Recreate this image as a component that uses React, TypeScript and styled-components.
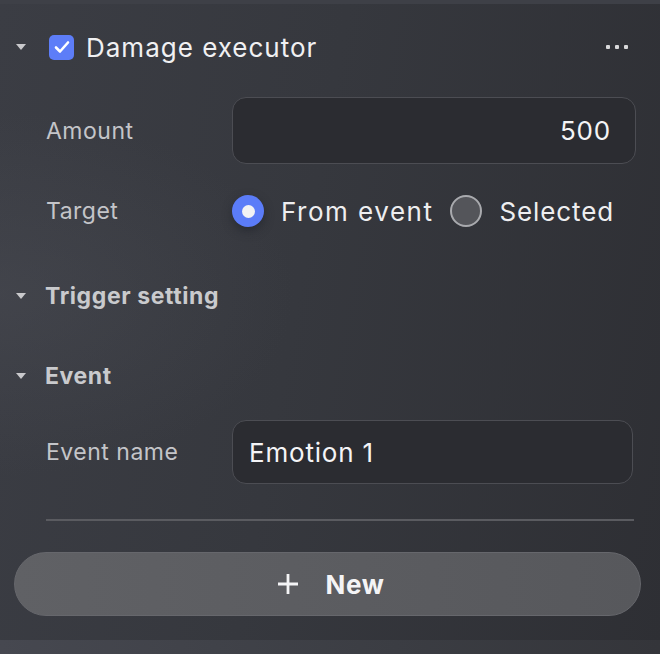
import React from "react";
import styled, { createGlobalStyle } from "styled-components";

const Global = createGlobalStyle`
  html, body { margin: 0; padding: 0; }
  body {
    width: 660px; height: 654px; overflow: hidden;
    font-family: Inter, "Noto Sans", sans-serif;
    background: #34363c;
  }
`;

const Panel = styled.div`
  position: relative;
  width: 660px;
  height: 654px;
  box-sizing: border-box;
  padding: 0 19px 0 14px;
  background:
    radial-gradient(ellipse 420px 260px at 0% 45%, rgba(80,82,90,0.35), transparent 70%),
    linear-gradient(100deg, #3b3d44 0%, #36383e 45%, #2e2f34 100%);
  display: flex;
  flex-direction: column;
  overflow: hidden;
`;

const TopEdge = styled.div`
  height: 4px;
  margin: 0 -19px 0 -14px;
  background: #3e4047;
`;

const BottomEdge = styled.div`
  position: absolute;
  left: 0; right: 0; bottom: 0;
  height: 14px;
  background: linear-gradient(90deg, #464850, #3b3d43 60%, #34353a);
`;

const HeaderRow = styled.div`
  display: flex;
  align-items: center;
  height: 32px;
  margin-top: 27px;
`;

const Caret = styled.span`
  width: 0; height: 0;
  border-left: 5.5px solid transparent;
  border-right: 5.5px solid transparent;
  border-top: 6px solid #c9c9cc;
  margin-left: 2px;
  margin-right: 19px;
  flex: none;
`;

const CheckBox = styled.span`
  width: 25px; height: 25px;
  border-radius: 5px;
  background: #5d7df8;
  display: flex; align-items: center; justify-content: center;
  margin-left: 4px;
  margin-right: 12px;
  flex: none;
`;

const Title = styled.span`
  color: #f0f0f2;
  font-size: 26px;
  letter-spacing: 1px;
  font-weight: 400;
  flex: 1;
`;

const Dots = styled.div`
  display: flex;
  gap: 5px;
  margin-right: 13px;
  span {
    width: 4px; height: 4px; border-radius: 1px;
    background: #d8d8da;
  }
`;

const FieldRow = styled.div<{ $mt: number; $h: number }>`
  display: flex;
  align-items: center;
  margin-top: ${p => p.$mt}px;
  height: ${p => p.$h}px;
  padding-left: 32px;
`;

const Label = styled.span`
  width: 186px;
  flex: none;
  color: #c4c5c9;
  font-size: 23px;
  letter-spacing: 0.5px;
`;

const Input = styled.div<{ $align: "left" | "right"; $w: number }>`
  box-sizing: border-box;
  width: ${p => p.$w}px;
  height: 100%;
  border-radius: 14px;
  background: #2b2c31;
  border: 1px solid #4c4d53;
  display: flex;
  align-items: center;
  justify-content: ${p => (p.$align === "right" ? "flex-end" : "flex-start")};
  padding: 0 24px 0 16px;
  color: #f4f4f6;
  font-size: 26px;
  letter-spacing: 0.8px;
`;

const RadioGroup = styled.div`
  display: flex;
  align-items: center;
`;

const Radio = styled.span<{ $on: boolean }>`
  box-sizing: border-box;
  width: 32px; height: 32px;
  border-radius: 50%;
  flex: none;
  display: flex; align-items: center; justify-content: center;
  background: ${p => (p.$on ? "#5b7cf8" : "#54555a")};
  border: ${p => (p.$on ? "none" : "2px solid #a9aaae")};
  box-shadow: ${p => (p.$on ? "0 4px 10px rgba(30,32,40,0.55)" : "none")};
  &::after {
    content: "";
    display: ${p => (p.$on ? "block" : "none")};
    width: 13px; height: 13px; border-radius: 50%;
    background: #f2f2f4;
  }
`;

const RadioText = styled.span<{ $gap: number; $ls: number }>`
  color: #eeeef0;
  font-size: 26px;
  letter-spacing: ${p => p.$ls}px;
  margin-left: 17px;
  margin-right: ${p => p.$gap}px;
`;

const SectionRow = styled.div<{ $mt: number }>`
  display: flex;
  align-items: center;
  margin-top: ${p => p.$mt}px;
  height: 30px;
`;

const SectionTitle = styled.span`
  color: #c9cacd;
  font-size: 23px;
  letter-spacing: 0.6px;
  font-weight: 700;
`;

const Divider = styled.div`
  margin: 35px 7px 0 32px;
  height: 2px;
  background: #5a5b60;
`;

const NewButton = styled.button`
  margin-top: 31px;
  width: 627px;
  height: 64px;
  border-radius: 32px;
  border: 1px solid #66676c;
  background: linear-gradient(90deg, #606165, #57585c);
  display: flex; align-items: center; justify-content: center;
  gap: 27px;
  color: #f4f4f6;
  font-family: Inter, "Noto Sans", sans-serif;
  font-size: 26px;
  letter-spacing: 0.6px;
  font-weight: 700;
  cursor: pointer;
  padding: 0 0 0 6px;
`;

export default function App() {
  return (
    <>
      <Global />
      <Panel>
        <TopEdge />
        <HeaderRow>
          <Caret />
          <CheckBox>
            <svg width="16" height="14" viewBox="0 0 16 14">
              <path d="M2 7.5 L6 11.5 L14 2.5" fill="none" stroke="#fff" strokeWidth="2.6" strokeLinecap="round" strokeLinejoin="round" />
            </svg>
          </CheckBox>
          <Title>Damage executor</Title>
          <Dots><span /><span /><span /></Dots>
        </HeaderRow>
        <FieldRow $mt={34} $h={67}>
          <Label>Amount</Label>
          <Input $align="right" $w={404}>500</Input>
        </FieldRow>
        <FieldRow $mt={31} $h={32}>
          <Label>Target</Label>
          <RadioGroup>
            <Radio $on={true} />
            <RadioText $gap={17} $ls={1.5}>From event</RadioText>
            <Radio $on={false} />
            <RadioText $gap={0} $ls={0.9}>Selected</RadioText>
          </RadioGroup>
        </FieldRow>
        <SectionRow $mt={54}>
          <Caret />
          <SectionTitle>Trigger setting</SectionTitle>
        </SectionRow>
        <SectionRow $mt={50}>
          <Caret />
          <SectionTitle>Event</SectionTitle>
        </SectionRow>
        <FieldRow $mt={29} $h={64}>
          <Label>Event name</Label>
          <Input $align="left" $w={401}>Emotion 1</Input>
        </FieldRow>
        <Divider />
        <NewButton>
          <svg width="22" height="22" viewBox="0 0 22 22">
            <path d="M11 1 V21 M1 11 H21" stroke="#f4f4f6" strokeWidth="2.8" />
          </svg>
          New
        </NewButton>
        <BottomEdge />
      </Panel>
    </>
  );
}
